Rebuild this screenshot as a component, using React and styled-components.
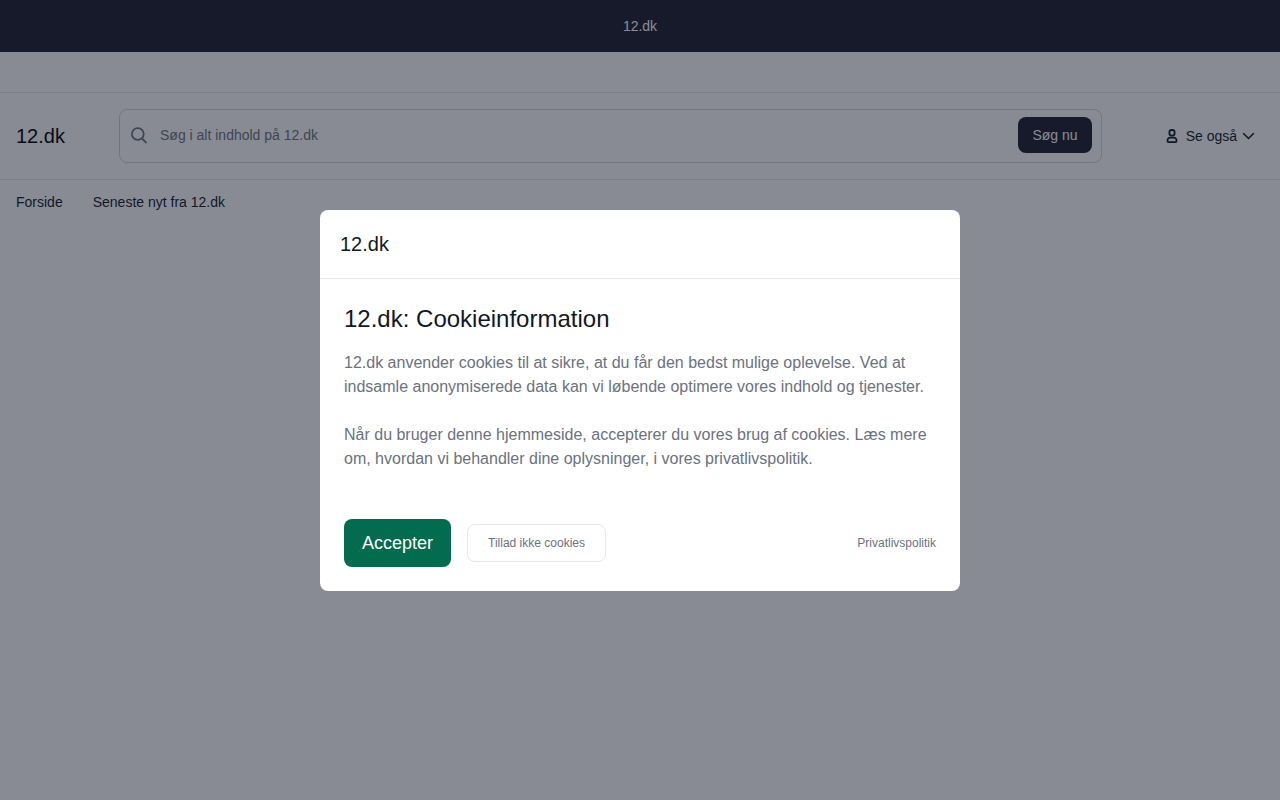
import React from "react"
import styled, { createGlobalStyle } from "styled-components"

const GlobalStyle = createGlobalStyle`
  * {
    box-sizing: border-box;
  }

  body {
    margin: 0;
    background: #fff;
    color: #111827;
    font-family: "Liberation Sans", Arial, sans-serif;
    font-size: 14px;
    line-height: 20px;
  }

  button, input {
    font: inherit;
  }
`

const TopBar = styled.div`
  padding: 16px;
  background: #1d1c2f;
  color: #fff;
  text-align: center;
`

const Strip = styled.div`
  height: 41px;
  border-bottom: 1px solid #e5e7eb;
`

const Header = styled.header`
  display: flex;
  align-items: center;
  padding: 16px;
  border-bottom: 1px solid #e5e7eb;
`

const Brand = styled.a`
  flex: none;
  width: 103px;
  color: #000;
  font-size: 20px;
  line-height: 28px;
  text-decoration: none;
`

const SearchForm = styled.form`
  display: flex;
  flex: 1;
  align-items: center;
  height: 54px;
  padding: 0 9px 2px 10px;
  border: 1px solid #d1d5db;
  border-radius: 8px;
`

const SearchIcon = styled.svg`
  flex: none;
  width: 18px;
  height: 18px;
  color: #6b7280;
`

const SearchInput = styled.input`
  flex: 1;
  min-width: 0;
  padding: 0 12px;
  border: 0;
  background: transparent;
  outline: none;

  &::placeholder {
    color: #6b7280;
    opacity: 1;
  }
`

const SearchButton = styled.button`
  padding: 8px 14px;
  border: 0;
  border-radius: 8px;
  background: #1d1c2f;
  color: #fff;
`

const MoreButton = styled.button`
  display: flex;
  align-items: center;
  margin-left: 64px;
  padding: 0 9px 0 0;
  border: 0;
  background: transparent;
  color: #111827;
`

const MoreLabel = styled.span`
  margin: 0 5px 0 8px;
`

const Nav = styled.nav`
  display: flex;
  gap: 30px;
  padding: 12px 16px;
`

const NavLink = styled.a`
  color: #111827;
  text-decoration: none;
`

const Overlay = styled.div`
  position: fixed;
  inset: 0;
  display: flex;
  align-items: center;
  justify-content: center;
  background: rgba(17, 24, 39, 0.5);
`

const Modal = styled.section`
  width: 100%;
  max-width: 640px;
  border-radius: 8px;
  background: #fff;
`

const ModalHeader = styled.div`
  padding: 20px;
  border-bottom: 1px solid #e5e7eb;
  font-size: 20px;
  line-height: 28px;
`

const ModalBody = styled.div`
  padding: 24px;
`

const Title = styled.h2`
  margin: 0 0 16px;
  font-size: 24px;
  font-weight: 400;
  line-height: 32px;
`

const Text = styled.p`
  margin: 0 0 24px;
  color: #6b7280;
  font-size: 16px;
  line-height: 24px;
`

const Actions = styled.div`
  display: flex;
  align-items: center;
  gap: 16px;
  padding-top: 24px;
`

const AcceptButton = styled.button`
  padding: 10px 18px;
  border: 0;
  border-radius: 8px;
  background: #046c4e;
  color: #fff;
  font-size: 18px;
  line-height: 28px;
`

const DeclineButton = styled.button`
  padding: 10px 20px;
  border: 1px solid #e5e7eb;
  border-radius: 8px;
  background: #fff;
  color: #6b7280;
  font-size: 12px;
  line-height: 16px;
`

const PolicyLink = styled.a`
  margin-left: auto;
  color: #6b7280;
  font-size: 12px;
  line-height: 16px;
  text-decoration: none;
`

const App = () => {
  return <>
    <GlobalStyle/>
    <TopBar>12.dk</TopBar>
    <Strip/>
    <Header>
      <Brand href="#">12.dk</Brand>
      <SearchForm role="search">
        <SearchIcon viewBox="0 0 18 18" fill="none" stroke="currentColor" strokeWidth="1.8" aria-hidden="true">
          <circle cx="7.8" cy="8" r="5.9"/>
          <path d="M12 12.500L16.500 17"/>
        </SearchIcon>
        <SearchInput type="search" aria-label="Søg" placeholder="Søg i alt indhold på 12.dk"/>
        <SearchButton type="submit">Søg nu</SearchButton>
      </SearchForm>
      <MoreButton type="button">
        <svg width="12" height="16" viewBox="0 0 12 16" fill="none" stroke="currentColor" strokeWidth="1.8" aria-hidden="true">
          <rect x="3.400" y="2" width="5.200" height="5.600" rx="2.300"/>
          <path d="M4.200 9.600h3.600a2.700 2.700 0 0 1 2.700 2.700v.8a1 1 0 0 1-1 1h-7a1 1 0 0 1-1-1v-.8a2.700 2.700 0 0 1 2.700-2.700z"/>
        </svg>
        <MoreLabel>Se også</MoreLabel>
        <svg width="13" height="8" viewBox="0 0 13 8" fill="none" stroke="currentColor" strokeWidth="1.6" aria-hidden="true">
          <path d="M1.200 1.300l5.300 5.200 5.300-5.200"/>
        </svg>
      </MoreButton>
    </Header>
    <Nav>
      <NavLink href="#">Forside</NavLink>
      <NavLink href="#">Seneste nyt fra 12.dk</NavLink>
    </Nav>

    <Overlay>
      <Modal role="dialog" aria-modal="true" aria-labelledby="cookie-title">
        <ModalHeader>12.dk</ModalHeader>
        <ModalBody>
          <Title id="cookie-title">12.dk: Cookieinformation</Title>
          <Text>
            12.dk anvender cookies til at sikre, at du får den bedst mulige oplevelse. Ved at
            indsamle anonymiserede data kan vi løbende optimere vores indhold og tjenester.
          </Text>
          <Text>
            Når du bruger denne hjemmeside, accepterer du vores brug af cookies. Læs mere
            om, hvordan vi behandler dine oplysninger, i vores privatlivspolitik.
          </Text>
          <Actions>
            <AcceptButton type="button">Accepter</AcceptButton>
            <DeclineButton type="button">Tillad ikke cookies</DeclineButton>
            <PolicyLink href="#">Privatlivspolitik</PolicyLink>
          </Actions>
        </ModalBody>
      </Modal>
    </Overlay>
  </>
}

export default App
